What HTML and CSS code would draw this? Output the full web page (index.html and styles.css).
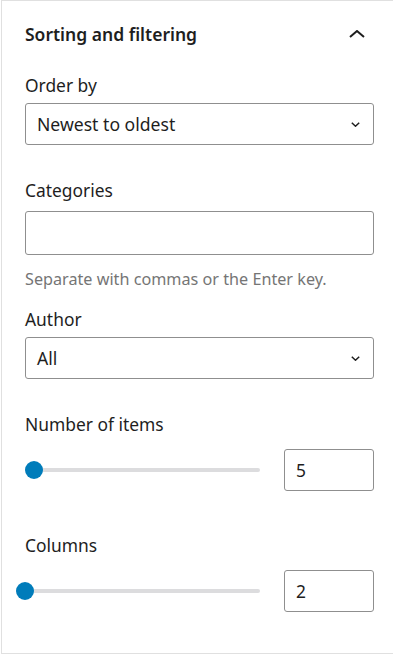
FILE: index.html
```html
<!DOCTYPE html>
<html lang="en">
<head>
<meta charset="utf-8">
<title>Sorting and filtering</title>
<link rel="stylesheet" href="styles.css">
</head>
<body>
<div class="panel">
  <div class="panel-header">
    <h2 class="panel-title">Sorting and filtering</h2>
    <svg class="chev-up" width="16" height="8" viewBox="0 0 16 8" aria-hidden="true"><polyline points="1,7 8,1 15,7" fill="none" stroke="#1e1e1e" stroke-width="2"/></svg>
  </div>
  <div class="panel-body">
    <div class="field f-order">
      <div class="label">Order by</div>
      <div class="select"><span>Newest to oldest</span><svg class="chev-down" width="9" height="5" viewBox="0 0 9 5" aria-hidden="true"><polyline points="0.8,0.8 4.5,4.2 8.2,0.8" fill="none" stroke="#1e1e1e" stroke-width="1.5"/></svg></div>
    </div>
    <div class="field f-cat">
      <div class="label label-cat">Categories</div>
      <div class="tokens"></div>
      <div class="help">Separate with commas or the Enter key.</div>
    </div>
    <div class="field f-author">
      <div class="label">Author</div>
      <div class="select"><span>All</span><svg class="chev-down" width="9" height="5" viewBox="0 0 9 5" aria-hidden="true"><polyline points="0.8,0.8 4.5,4.2 8.2,0.8" fill="none" stroke="#1e1e1e" stroke-width="1.5"/></svg></div>
    </div>
    <div class="field f-items">
      <div class="label label-range">Number of items</div>
      <div class="range-row">
        <div class="range"><div class="track"></div><div class="thumb" style="left: 4.04%"></div></div>
        <div class="num">5</div>
      </div>
    </div>
    <div class="field f-cols">
      <div class="label label-range">Columns</div>
      <div class="range-row">
        <div class="range"><div class="track"></div><div class="thumb" style="left: 0%"></div></div>
        <div class="num">2</div>
      </div>
    </div>
  </div>
</div>
</body>
</html>
```

FILE: styles.css
```css
* { box-sizing: border-box; }
html, body { margin: 0; padding: 0; background: #fff; }
body {
  font-family: "Noto Sans", "Open Sans", sans-serif;
  color: #1e1e1e;
  width: 393px;
  height: 655px;
  overflow: hidden;
}
.panel {
  margin-left: 1px;
  border-left: 1px solid #e0e0e0;
  border-top: 1px solid #e0e0e0;
  border-bottom: 1px solid #e0e0e0;
  height: 654px;
  padding: 0 19px 0 23px;
}
.panel-header {
  display: flex;
  align-items: center;
  justify-content: space-between;
  padding-top: 21px;
}
.panel-title {
  margin: 0;
  font-size: 17.5px;
  font-weight: 600;
  line-height: 24px;
}
.chev-up { margin-right: 9px; }
.label {
  font-size: 17.4px;
  line-height: 20px;
  margin-bottom: 8px;
}
.f-order { margin-top: 29px; }
.f-cat { margin-top: 35px; }
.label-cat { margin-bottom: 11px; }
.f-author { margin-top: 20px; }
.f-items { margin-top: 35px; }
.f-cols { margin-top: 44px; }
.label-range { margin-bottom: 15px; }
.select {
  height: 42px;
  border: 1px solid #8f8f8f;
  border-radius: 3px;
  display: flex;
  align-items: center;
  justify-content: space-between;
  padding: 0 14px 0 11px;
  font-size: 17.6px;
}
.chev-down { margin-right: -1px; }
.tokens {
  height: 44px;
  border: 1px solid #8f8f8f;
  border-radius: 3px;
}
.help {
  margin-top: 14px;
  font-size: 16.2px;
  line-height: 20px;
  color: #757575;
}
.range-row {
  display: flex;
  align-items: center;
  gap: 24px;
}
.range {
  flex: 1;
  position: relative;
  height: 42px;
}
.track {
  position: absolute;
  left: 1px;
  right: 0;
  top: 19px;
  height: 4px;
  border-radius: 2px;
  background: #dcdcde;
}
.thumb {
  position: absolute;
  top: 12px;
  width: 18px;
  height: 18px;
  margin-left: -9px;
  border-radius: 50%;
  background: #007cba;
}
.num {
  width: 90px;
  height: 42px;
  border: 1px solid #8f8f8f;
  border-radius: 3px;
  display: flex;
  align-items: center;
  padding-left: 11px;
  font-size: 17.4px;
}
```
